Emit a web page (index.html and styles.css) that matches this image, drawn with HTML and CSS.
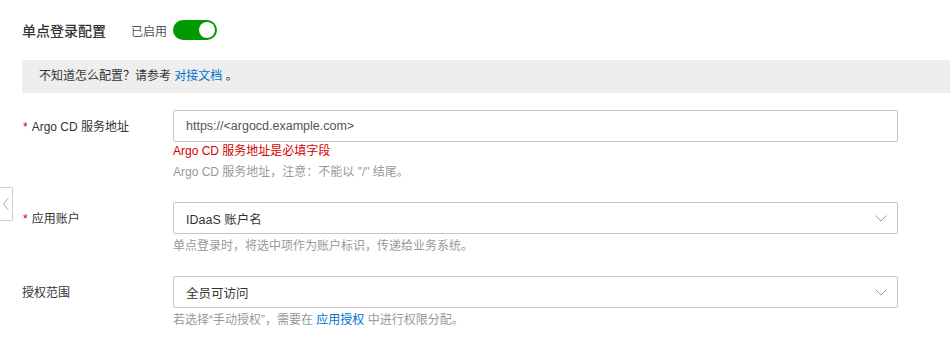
FILE: index.html
```html
<!DOCTYPE html>
<html lang="zh-CN">
<head>
  <meta charset="UTF-8" />
  <meta name="viewport" content="width=device-width, initial-scale=1.0"/>
  <title>单点登录配置</title>
  <link rel="stylesheet" href="styles.css">
</head>
<body>
  <div class="side-tab">
    <svg width="8" height="14" viewBox="0 0 8 14"><path d="M6.5 1 L1.5 7 L6.5 13" fill="none" stroke="#aaa" stroke-width="1"/></svg>
  </div>

  <div class="page">
    <div class="header">
      <h2 class="title">单点登录配置</h2>
      <span class="status">已启用</span>
      <span class="switch"><span class="knob"></span></span>
    </div>

    <div class="notice">不知道怎么配置？请参考 <a href="#">对接文档</a> 。</div>

    <form class="form">
      <div class="row">
        <label class="label"><span class="req">*</span>Argo CD 服务地址</label>
        <div class="field">
          <input class="input" type="text" placeholder="https://<argocd.example.com>">
          <div class="error">Argo CD 服务地址是必填字段</div>
          <div class="help">Argo CD 服务地址，注意：不能以 "/" 结尾。</div>
        </div>
      </div>

      <div class="row">
        <label class="label"><span class="req">*</span>应用账户</label>
        <div class="field">
          <div class="select">
            <span>IDaaS 账户名</span>
            <svg width="12" height="7" viewBox="0 0 12 7"><path d="M0.5 0.5 L6 6 L11.5 0.5" fill="none" stroke="#999" stroke-width="1"/></svg>
          </div>
          <div class="help">单点登录时，将选中项作为账户标识，传递给业务系统。</div>
        </div>
      </div>

      <div class="row">
        <label class="label">授权范围</label>
        <div class="field">
          <div class="select">
            <span>全员可访问</span>
            <svg width="12" height="7" viewBox="0 0 12 7"><path d="M0.5 0.5 L6 6 L11.5 0.5" fill="none" stroke="#999" stroke-width="1"/></svg>
          </div>
          <div class="help">若选择“手动授权”，需要在 <a href="#">应用授权</a> 中进行权限分配。</div>
        </div>
      </div>
    </form>
  </div>
</body>
</html>
```

FILE: styles.css
```css
body {
  margin: 0;
  font-family: "Liberation Sans", "Noto Sans CJK SC", sans-serif;
  font-size: 12px;
  color: #333;
  background: #fff;
}
a {
  color: #0070cc;
  text-decoration: none;
}
.page {
  padding-left: 22px;
}
.header {
  display: flex;
  align-items: center;
  height: 60px;
}
.title {
  margin: 0;
  font-size: 14px;
  font-weight: 500;
  color: #333;
}
.status {
  margin-left: 25px;
  color: #555;
}
.switch {
  display: flex;
  align-items: center;
  justify-content: flex-end;
  margin-left: 6px;
  width: 44px;
  height: 20px;
  padding: 0 2px;
  box-sizing: border-box;
  border-radius: 10px;
  background: #009a00;
}
.knob {
  width: 16px;
  height: 16px;
  border-radius: 50%;
  background: #fff;
}
.notice {
  background: #eee;
  height: 33px;
  line-height: 33px;
  padding-left: 17px;
  color: #333;
}
.form {
  width: 876px;
  padding-top: 17px;
}
.row {
  display: flex;
  margin-bottom: 20px;
}
.label {
  width: 151px;
  flex-shrink: 0;
  line-height: 32px;
  padding-top: 1px;
  color: #333;
}
.req {
  color: #d40000;
  margin-right: 4px;
  margin-left: 1px;
}
.field {
  flex: 1;
}
.input,
.select {
  display: flex;
  align-items: center;
  justify-content: space-between;
  width: 100%;
  height: 32px;
  box-sizing: border-box;
  border: 1px solid #c4c6cf;
  border-radius: 2px;
  padding: 0 10px 0 12px;
  font-family: inherit;
  font-size: 12.5px;
  color: #333;
  outline: none;
  background: #fff;
}
.input::placeholder {
  color: #555;
}
.error {
  line-height: 18px;
  color: #d40000;
}
.help {
  margin-top: 2px;
  line-height: 20px;
  color: #999;
}
.side-tab {
  position: absolute;
  left: 0;
  top: 187px;
  width: 12px;
  height: 32px;
  border: 1px solid #ccc;
  border-left: none;
  border-radius: 0 2px 2px 0;
  background: #fff;
  display: flex;
  align-items: center;
  justify-content: center;
}
```
